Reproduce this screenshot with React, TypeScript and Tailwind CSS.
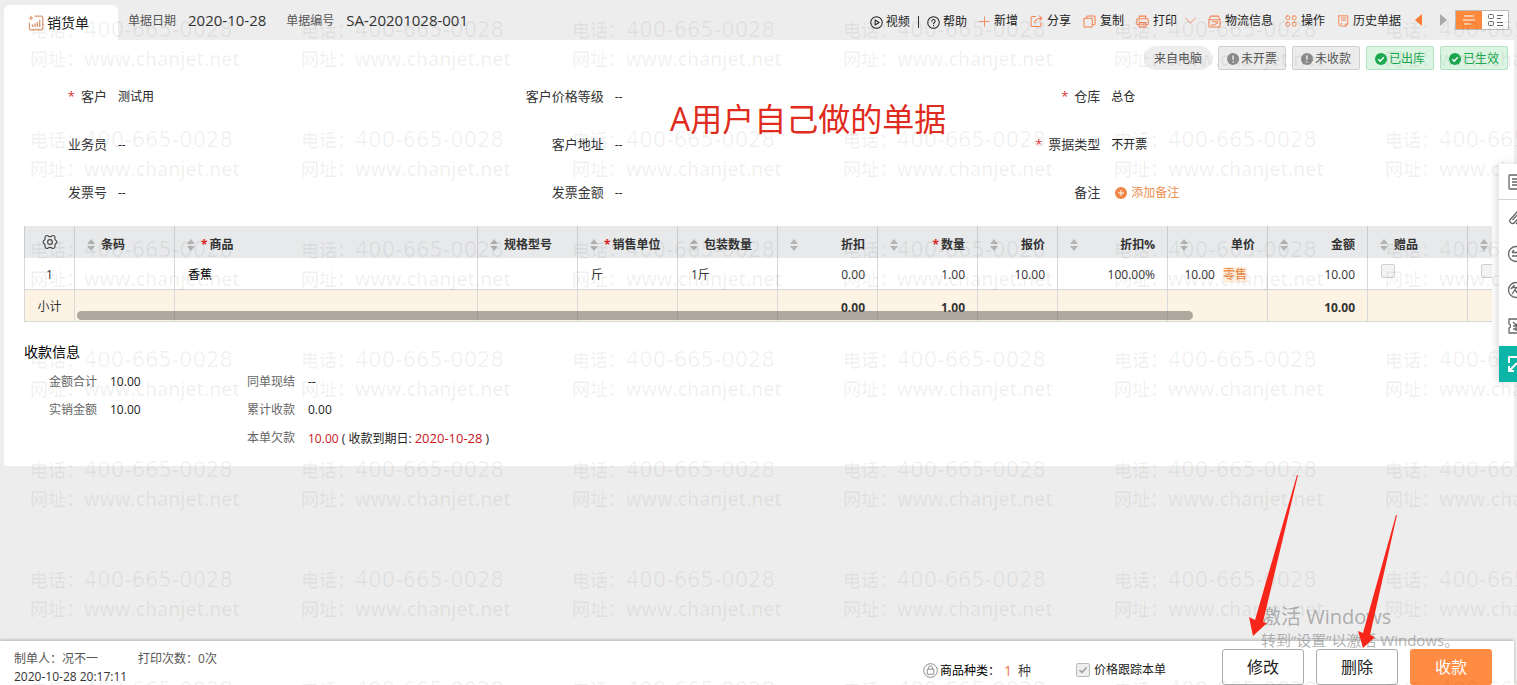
import { Fragment, type ReactNode } from 'react';
import clsx from 'clsx';

type IconProps = { className?: string };

const ORANGE = 'text-[#f5814f]';

function Svg({ className = 'size-[13px]', children }: { className?: string; children: ReactNode }) {
    return (
        <svg
            className={clsx('shrink-0', className)}
            viewBox="0 0 14 14"
            fill="none"
            stroke="currentColor"
            strokeWidth="1.1"
            strokeLinecap="round"
            strokeLinejoin="round"
            aria-hidden="true"
        >
            {children}
        </svg>
    );
}

const VideoIcon = () => (
    <Svg>
        <circle cx="7" cy="7" r="6.2" />
        <path d="M5.5 4.3v5.4L9.8 7z" />
    </Svg>
);

const HelpIcon = () => (
    <Svg>
        <circle cx="7" cy="7" r="6.2" />
        <path d="M5.2 5.6a1.8 1.8 0 1 1 2.6 1.6c-.6.3-.8.6-.8 1.2M7 10.3v.1" />
    </Svg>
);

const PlusIcon = () => (
    <Svg className="size-[11px]">
        <path d="M7 1v12M1 7h12" />
    </Svg>
);

const ShareIcon = () => (
    <Svg>
        <path d="M6 1.5H3A1.8 1.8 0 0 0 1.2 3.3v7.4A1.8 1.8 0 0 0 3 12.5h7a1.8 1.8 0 0 0 1.8-1.8V8.5" />
        <path d="M5 8.5C5.2 5.5 7 3.6 12 3.4M10 1l2.8 2.3L10.6 6" />
    </Svg>
);

const CopyIcon = () => (
    <Svg>
        <rect x="1" y="3.5" width="9" height="9.5" rx="1" />
        <path d="M4 3.3V2a1 1 0 0 1 1-1h7a1 1 0 0 1 1 1v7.5a1 1 0 0 1-1 1h-1.8" />
    </Svg>
);

const PrintIcon = () => (
    <Svg>
        <path d="M3.5 4V1.2h7V4M3.5 10.5H2.2A1.4 1.4 0 0 1 .8 9V5.4A1.4 1.4 0 0 1 2.2 4h9.6a1.4 1.4 0 0 1 1.4 1.4V9a1.4 1.4 0 0 1-1.4 1.5h-1.3" />
        <path d="M3.5 8.2h7V13h-7zM5.2 10.6h3.6M3 6.2h1" />
    </Svg>
);

const ChevronIcon = () => (
    <Svg className="size-[11px]">
        <path d="M.8 4.2 7 10l6.2-5.8" />
    </Svg>
);

const LogisticsIcon = () => (
    <Svg>
        <path d="M1 5l1.8-3.8h8.4L13 5v7.200a.8.8 0 0 1-.8.8H1.800a.8.8 0 0 1-.8-.8zM1 5h12" />
        <path d="M4.500 7.200h6M3.500 10.700h3c2 0 2-2 4-2.200" />
    </Svg>
);

const ActionsIcon = () => (
    <Svg className="size-3">
        <rect x="1" y="1" width="4.5" height="4.5" rx="1.8" />
        <rect x="8.5" y="1" width="4.5" height="4.5" rx="1.8" />
        <rect x="1" y="8.5" width="4.5" height="4.5" rx="1.8" />
        <rect x="8.5" y="8.5" width="4.5" height="4.5" rx="1.8" />
    </Svg>
);

const HistoryIcon = () => (
    <Svg className="size-3">
        <path d="M2 1h10.500v9.500L10 13H6M2 1v9.800a1.600 1.600 0 0 0 3.200 0V9.500M10 13v-2.500h2.500" />
        <path d="M5 3.500h5M5 6h5" />
    </Svg>
);

function DocumentIcon() {
    return (
        <svg viewBox="0 0 16 16" className="size-4 text-[#e0956a]" fill="none" stroke="currentColor" strokeWidth="1.2" aria-hidden="true">
            <path d="M6.500 1.200h6.700a1.600 1.600 0 0 1 1.600 1.600v10.400a1.600 1.600 0 0 1-1.600 1.600H3a1.600 1.600 0 0 1-1.600-1.600V7.500" />
            <path d="M3 .8v4.400M.8 3h4.400M4.500 9.500v2.500M7 8.300V12M9.300 7v5M11.700 4.800V12" />
        </svg>
    );
}

function GearIcon() {
    return (
        <svg viewBox="0 0 16 16" className="size-4 text-[#444]" fill="none" stroke="currentColor" strokeWidth="1.1" strokeLinejoin="round" aria-hidden="true">
            <path d="M5.200 1.500C6 1.500 6.500 2.700 8 2.700s2-1.200 2.800-1.200 2.200.9 2.200 1.700-.4 1.500.1 2.400 1.900 1.200 1.900 2.400-1.400 1.500-1.900 2.400.1 1.600-.1 2.400-1.400 1.700-2.200 1.700S9.500 13.300 8 13.300s-2 1.200-2.800 1.200S3 13.600 3 12.800s.4-1.500-.1-2.400S1 9.200 1 8s1.400-1.500 1.900-2.400S2.800 4 3 3.200s1.400-1.700 2.200-1.700z" />
            <circle cx="8" cy="8" r="2.400" />
        </svg>
    );
}

function StatusMark({ done }: { done: boolean }) {
    return (
        <svg viewBox="0 0 12 12" className="size-3 shrink-0" aria-hidden="true">
            <circle cx="6" cy="6" r="6" fill={done ? '#1ca84f' : '#8c8c8c'} />
            {done ? (
                <path d="M3.2 6.200l2 2 3.600-4" fill="none" stroke="#fff" strokeWidth="1.5" />
            ) : (
                <path d="M6 2.600v4.200M6 8.200v1.400" stroke="#eee" strokeWidth="1.5" />
            )}
        </svg>
    );
}

const toolbar: { label: string; icon: ReactNode }[] = [
    { label: '新增', icon: <PlusIcon /> },
    { label: '分享', icon: <ShareIcon /> },
    { label: '复制', icon: <CopyIcon /> },
    { label: '打印', icon: <PrintIcon /> },
    { label: '物流信息', icon: <LogisticsIcon /> },
    { label: '操作', icon: <ActionsIcon /> },
    { label: '历史单据', icon: <HistoryIcon /> },
];

const statuses = [
    { label: '未开票', done: false },
    { label: '未收款', done: false },
    { label: '已出库', done: true },
    { label: '已生效', done: true },
];

const fields: { label: string; value?: string; required?: boolean }[] = [
    { label: '客户', value: '测试用', required: true },
    { label: '客户价格等级', value: '--' },
    { label: '仓库', value: '总仓', required: true },
    { label: '业务员', value: '--' },
    { label: '客户地址', value: '--' },
    { label: '票据类型', value: '不开票', required: true },
    { label: '发票号', value: '--' },
    { label: '发票金额', value: '--' },
    { label: '备注' },
];

type Column = {
    title: string;
    width: string;
    required?: boolean;
    right?: boolean;
    value?: ReactNode;
    total?: string;
};

const GiftBox = ({ label }: { label: string }) => (
    <input
        type="checkbox"
        disabled
        aria-label={label}
        className="block size-[14px] -translate-y-1 appearance-none rounded-xs border border-[#cfcfcf] bg-[#f3f3f3]"
    />
);

const columns: Column[] = [
    { title: '条码', width: 'w-[100px]' },
    { title: '商品', width: 'w-[303px]', required: true, value: <span className="text-black">香蕉</span> },
    { title: '规格型号', width: 'w-[100px]' },
    { title: '销售单位', width: 'w-[100px]', required: true, value: '斤' },
    { title: '包装数量', width: 'w-[100px]', value: '1斤' },
    { title: '折扣', width: 'w-[100px]', right: true, value: '0.00', total: '0.00' },
    { title: '数量', width: 'w-[100px]', right: true, required: true, value: '1.00', total: '1.00' },
    { title: '报价', width: 'w-[80px]', right: true, value: '10.00' },
    { title: '折扣%', width: 'w-[110px]', right: true, value: '100.00%' },
    {
        title: '单价',
        width: 'w-[100px]',
        right: true,
        value: (
            <span className="mr-2 flex justify-end gap-2">
                10.00
                <span className="bg-[#fdeedd] text-[#e8833a]">零售</span>
            </span>
        ),
    },
    { title: '金额', width: 'w-[100px]', right: true, value: '10.00', total: '10.00' },
    { title: '赠品', width: 'w-[100px]', value: <GiftBox label="赠品" /> },
    { title: '', width: 'w-[100px]', value: <GiftBox label="选择" /> },
];

function SortButton({ label }: { label: string }) {
    return (
        <button type="button" aria-label={`${label}排序`} className="shrink-0">
            <svg viewBox="0 0 8 12" className="h-3 w-2" fill="#b4b4b4" aria-hidden="true">
                <path d="M4 0l4 5H0zM4 12L0 7h8z" />
            </svg>
        </button>
    );
}

function Header() {
    return (
        <header className="flex h-10 items-end pl-1 pr-2">
            <div className="flex h-[35px] w-[114px] shrink-0 items-center gap-[3px] rounded-t-md bg-white pl-6 text-sm">
                <DocumentIcon />
                <h1>销货单</h1>
            </div>
            <dl className="flex h-10 items-center whitespace-nowrap pl-[10px]">
                <dt className="pt-0.5 text-xs text-[#555]">单据日期</dt>
                <dd className="pl-3 pr-5 text-[15px] text-[#333]">2020-10-28</dd>
                <dt className="pt-0.5 text-xs text-[#555]">单据编号</dt>
                <dd className="pl-3 text-[15px] text-[#333]">SA-20201028-001</dd>
            </dl>
            <nav className="ml-auto flex h-10 items-center gap-3 whitespace-nowrap text-xs">
                <div className="flex items-center gap-2 pt-1">
                    <button type="button" className="flex items-center gap-[3px]">
                        <VideoIcon />
                        视频
                    </button>
                    <span className="h-3 w-px bg-[#333]" />
                    <button type="button" className="flex items-center gap-[3px]">
                        <HelpIcon />
                        帮助
                    </button>
                </div>
                {toolbar.map((item) => (
                    <Fragment key={item.label}>
                        <button type="button" className="flex items-center gap-1 pt-0.5">
                            <span className={ORANGE}>{item.icon}</span>
                            {item.label}
                        </button>
                        {item.label === '打印' && (
                            <button type="button" aria-label="更多打印" className={clsx('-ml-1', ORANGE)}>
                                <ChevronIcon />
                            </button>
                        )}
                    </Fragment>
                ))}
                <button type="button" aria-label="上一张" className="ml-0.5">
                    <svg viewBox="0 0 7 12" className="h-3 w-[7px]" fill="#ff7a33"><path d="M7 0v12L0 6z" /></svg>
                </button>
                <button type="button" aria-label="下一张" className="ml-1.5">
                    <svg viewBox="0 0 7 12" className="h-3 w-[7px]" fill="#aaa"><path d="M0 0v12l7-6z" /></svg>
                </button>
                <div className="-ml-1 flex h-5 w-[54px] border border-[#bbb] bg-white">
                    <button type="button" aria-label="列表视图" className="flex w-[26px] items-center justify-center bg-[#ff8a3c]">
                        <svg viewBox="0 0 12 10" className="h-[10px] w-3" stroke="#fff" strokeWidth="1.2"><path d="M1 1h10M0 5h12M1 9h7" /></svg>
                    </button>
                    <button type="button" aria-label="卡片视图" className="flex flex-1 items-center justify-center">
                        <svg viewBox="0 0 15 12" className="h-3 w-[15px]" fill="none" stroke="#666">
                            <rect x=".5" y=".5" width="5" height="4" rx="1" />
                            <rect x=".5" y="7.5" width="5" height="4" rx="1" />
                            <path d="M9 1.500h6M9 4.500h4M9 8.500h6M9 11.500h6" />
                        </svg>
                    </button>
                </div>
            </nav>
        </header>
    );
}

function StatusBar() {
    return (
        <div className="flex h-[33px] items-start justify-end gap-1.5 pr-1.5 pt-1.5 text-xs">
            <span className="flex h-6 items-center rounded-full bg-[#ededed] px-[10px] pt-0.5 text-[#555]">来自电脑</span>
            {statuses.map(({ label, done }) => (
                <span
                    key={label}
                    className={clsx(
                        'flex h-6 w-[68px] items-center justify-center gap-0.5 rounded-xs border pt-0.5',
                        done ? 'border-[#b5e2c2] bg-[#dcf5e3] text-[#1ca84f]' : 'border-[#cfcfcf] bg-[#ececec] text-[#555]',
                    )}
                >
                    <StatusMark done={done} />
                    {label}
                </span>
            ))}
        </div>
    );
}

function Fields() {
    return (
        <dl className="grid grid-cols-3 pr-5">
            {fields.map((field) => (
                <div key={field.label} className="flex h-12 items-center gap-[11px]">
                    <dt className="w-[103px] shrink-0 whitespace-nowrap text-right text-[13px] text-[#333]">
                        {field.required && <span className="mr-1.5 text-[#d33]">*</span>}
                        {field.label}
                    </dt>
                    <dd className="text-xs text-[#222]">
                        {field.value ?? (
                            <button type="button" className="ml-1 flex items-center gap-1 text-[#ea8d4e]">
                                <svg viewBox="0 0 12 12" className="size-3" aria-hidden="true">
                                    <circle cx="6" cy="6" r="6" fill="#ee8745" />
                                    <path d="M6 3v6M3 6h6" stroke="#fff" />
                                </svg>
                                添加备注
                            </button>
                        )}
                    </dd>
                </div>
            ))}
        </dl>
    );
}

function ItemsTable() {
    return (
        <div className="relative ml-5 mr-[22px] mt-[9px] overflow-hidden">
            <table className="w-[1543px] table-fixed border-separate border-spacing-0 text-xs">
                <thead>
                    <tr className="h-8 bg-[#e7e9eb]">
                        <th className="w-[51px] border-x border-[#cccccc] p-0">
                            <button type="button" aria-label="列设置" className="flex w-full justify-center">
                                <GearIcon />
                            </button>
                        </th>
                        {columns.map((col, i) => (
                            <th key={i} className={clsx('border-r border-[#cccccc] px-3 py-0 font-bold', col.width)}>
                                <div className={clsx('flex items-center gap-1.5 whitespace-nowrap pt-1.5', col.right && 'justify-between')}>
                                    <SortButton label={col.title} />
                                    <span className="text-[#333]">
                                        {col.required && <span className="mr-0.5 text-[#d22]">*</span>}
                                        {col.title}
                                    </span>
                                </div>
                            </th>
                        ))}
                    </tr>
                </thead>
                <tbody>
                    <tr className="h-8 text-[#333]">
                        <td className="border-x border-b border-[#d8d8d8] p-0 pt-0.5 text-center">1</td>
                        {columns.map((col, i) => (
                            <td key={i} className={clsx('whitespace-nowrap border-b border-r border-[#d8d8d8] pb-0 pl-[13px] pr-3 pt-0.5', col.right && 'text-right')}>
                                {col.value}
                            </td>
                        ))}
                    </tr>
                </tbody>
                <tfoot>
                    <tr className="h-8 bg-[#fdf3e4] text-[#333]">
                        <td className="border-x border-b border-[#d8d8d8] p-0 pt-0.5 text-center">小计</td>
                        {columns.map((col, i) => (
                            <td key={i} className="border-b border-r border-[#d8d8d8] px-3 pb-0 pt-1 text-right font-bold">
                                {col.total}
                            </td>
                        ))}
                    </tr>
                </tfoot>
            </table>
            <div className="absolute bottom-0.5 left-[53px] h-[9px] w-[76%] rounded-full bg-[#5f5b56]/50" />
        </div>
    );
}

function Payment() {
    return (
        <section className="px-5 pt-5 text-xs">
            <h2 className="text-sm leading-5 text-black">收款信息</h2>
            <div className="flex pl-[25px] pt-1.5 leading-7">
                <dl className="grid w-[198px] grid-cols-[61px_1fr] content-start">
                    <dt className="text-[#666]">金额合计</dt>
                    <dd>10.00</dd>
                    <dt className="text-[#666]">实销金额</dt>
                    <dd>10.00</dd>
                </dl>
                <dl className="grid grid-cols-[61px_1fr]">
                    <dt className="text-[#666]">同单现结</dt>
                    <dd>--</dd>
                    <dt className="text-[#666]">累计收款</dt>
                    <dd>0.00</dd>
                    <dt className="text-[#666]">本单欠款</dt>
                    <dd>
                        <span className="text-[#c8161d]">10.00</span> ( 收款到期日: <span className="text-[13px] text-[#c8161d]">2020-10-28</span> )
                    </dd>
                </dl>
            </div>
        </section>
    );
}

function SideIcon({ className, children }: IconProps & { children: ReactNode }) {
    return (
        <svg viewBox="0 0 18 18" className={clsx('size-[18px] shrink-0', className)} fill="none" stroke="currentColor" strokeWidth="1.3" strokeLinejoin="round" aria-hidden="true">
            {children}
        </svg>
    );
}

const sideTools = [
    { label: '单据', icon: <><rect x="2" y="2" width="14" height="14" rx="1" /><path d="M5 6h8M5 9h8M5 12h8" /></> },
    { label: '附件', icon: <path d="M15 5l-7.500 8.500a2.500 2.500 0 0 1-4-3.300L10 3a3.500 3.500 0 0 1 5 5l-6 7M11 5l-5.500 6" /> },
    { label: '客服', icon: <><circle cx="9" cy="9" r="7.5" /><path d="M5 7.500h8M5 11h8M7 5L5 7.500" /></> },
    { label: '往来', icon: <><circle cx="9" cy="9" r="7.5" /><path d="M4 8l3.500-4M5.500 6.500h4L5 13M8 9l3 4" /></> },
    { label: '优惠券', icon: <><path d="M2 2h14v5c-2 0-2 4 0 4v5H2v-5c2 0 2-4 0-4z" /><path d="M6 5l3 3 3-3M6 9h6M6 12h6M9 8v6" /></> },
];

function SideRail() {
    return (
        <aside className="absolute right-0 top-41 w-[18px] bg-white text-[#666] shadow-[-2px_0_8px_rgba(0,0,0,0.15)]">
            {sideTools.map((tool, i) => (
                <button
                    key={tool.label}
                    type="button"
                    aria-label={tool.label}
                    className={clsx('flex h-9 w-full items-center overflow-hidden pl-2', i === 0 && 'border-b border-[#d5d5d5]')}
                >
                    <SideIcon>{tool.icon}</SideIcon>
                </button>
            ))}
            <button type="button" aria-label="展开" className="mt-0.5 flex h-9 w-full items-center overflow-hidden bg-[#0db5a6] pl-2 text-white">
                <SideIcon>
                    <path strokeWidth="2" d="M2 8V2h14v14h-5M2 11v5h5M2.500 15.500L10 8" />
                </SideIcon>
            </button>
        </aside>
    );
}

function Footer() {
    return (
        <footer className="mr-[3px] flex h-11 justify-between bg-white pl-[14px] pr-[22px] text-xs shadow-[0_-1px_3px_rgba(0,0,0,0.25)]">
            <div className="pt-[9px] leading-[18px] text-[#333]">
                <p className="flex gap-10 text-[#555]">
                    <span>制单人：况不一</span>
                    <span>打印次数：0次</span>
                </p>
                <p>2020-10-28 20:17:11</p>
            </div>
            <div className="flex items-start pt-2">
                <p className="mr-[45px] flex h-[43px] items-center text-black">
                    <svg viewBox="0 0 16 16" className="mr-0.5 size-[15px]" fill="none" stroke="#888" aria-hidden="true">
                        <circle cx="8" cy="8" r="7.3" />
                        <path d="M4.500 6.500h7V12h-7zM6 6.500V5a2 2 0 0 1 4 0v1.500" />
                    </svg>
                    商品种类：
                    <span className="ml-1 mr-1.5 text-sm text-[#f0794a]">1</span>
                    <span className="text-[13px] text-[#444]">种</span>
                </p>
                <label className="mr-14 flex h-[42px] items-center gap-1 text-[#222]">
                    <span className="relative flex">
                        <input type="checkbox" defaultChecked disabled className="size-[14px] appearance-none rounded-xs border border-[#bbb] bg-[#eee]" />
                        <svg viewBox="0 0 14 14" className="absolute inset-0 size-[14px]" fill="none" stroke="#999" strokeWidth="1.5" aria-hidden="true">
                            <path d="M3.500 7l2.500 2.500L10.500 4.500" />
                        </svg>
                    </span>
                    价格跟踪本单
                </label>
                <div className="flex gap-3 text-base">
                    <button type="button" className="h-9 w-[82px] rounded-[3px] border border-[#aaa] bg-white">修改</button>
                    <button type="button" className="h-9 w-[82px] rounded-[3px] border border-[#aaa] bg-white">删除</button>
                    <button type="button" className="h-9 w-[82px] rounded-[3px] bg-[#ff8c42] text-white">收款</button>
                </div>
            </div>
        </footer>
    );
}

function Watermark() {
    return (
        <div aria-hidden="true" className="pointer-events-none absolute inset-0 overflow-hidden">
            <div className="grid w-[calc(100%+271px)] auto-rows-[110px] grid-cols-[repeat(auto-fill,271px)] pl-[30px] pt-4 text-lg font-medium text-black/6">
                {Array.from({ length: 42 }, (_, i) => (
                    <div key={i} className="whitespace-nowrap leading-[29px]">
                        <p className="flex">
                            电话：<span className="font-['DejaVu_Sans'] text-[21px] leading-[29px]">400-665-0028</span>
                        </p>
                        <p className="flex">
                            网址：<span className="text-[19px] font-semibold leading-[29px]">www.chanjet.net</span>
                        </p>
                    </div>
                ))}
            </div>
        </div>
    );
}

function Annotations() {
    return (
        <div className="pointer-events-none absolute inset-0 overflow-hidden">
            <p className="absolute left-[670px] top-[99px] text-[32px] leading-10 text-[#e02b20]">A用户自己做的单据</p>
            <div className="absolute bottom-[34px] right-[61px] w-[195px] whitespace-nowrap text-[#888]/65">
                <p className="text-xl leading-6">激活 Windows</p>
                <p className="text-[15px] leading-[22px]">转到“设置”以激活 Windows。</p>
            </div>
            <svg viewBox="0 0 148 173" className="absolute bottom-[37px] right-[120px] h-[173px] w-[148px]" fill="#f8261a" aria-hidden="true">
                <path d="M48 0h1L14 147l4 1L4 161 0 142l6 3z" />
                <path d="M147 40h1L121 160l5 2-12 11-5-17 5 2z" />
            </svg>
        </div>
    );
}

export default function App() {
    return (
        <div className="relative flex min-h-screen flex-col bg-[#ededed] [font-family:'Open_Sans','Noto_Sans_CJK_SC',sans-serif] text-[#222]">
            <Header />
            <main className="ml-1 mr-[3px] bg-white pb-[13px]">
                <StatusBar />
                <Fields />
                <ItemsTable />
                <Payment />
            </main>
            <div className="flex-1" />
            <Footer />
            <Watermark />
            <SideRail />
            <Annotations />
        </div>
    );
}
